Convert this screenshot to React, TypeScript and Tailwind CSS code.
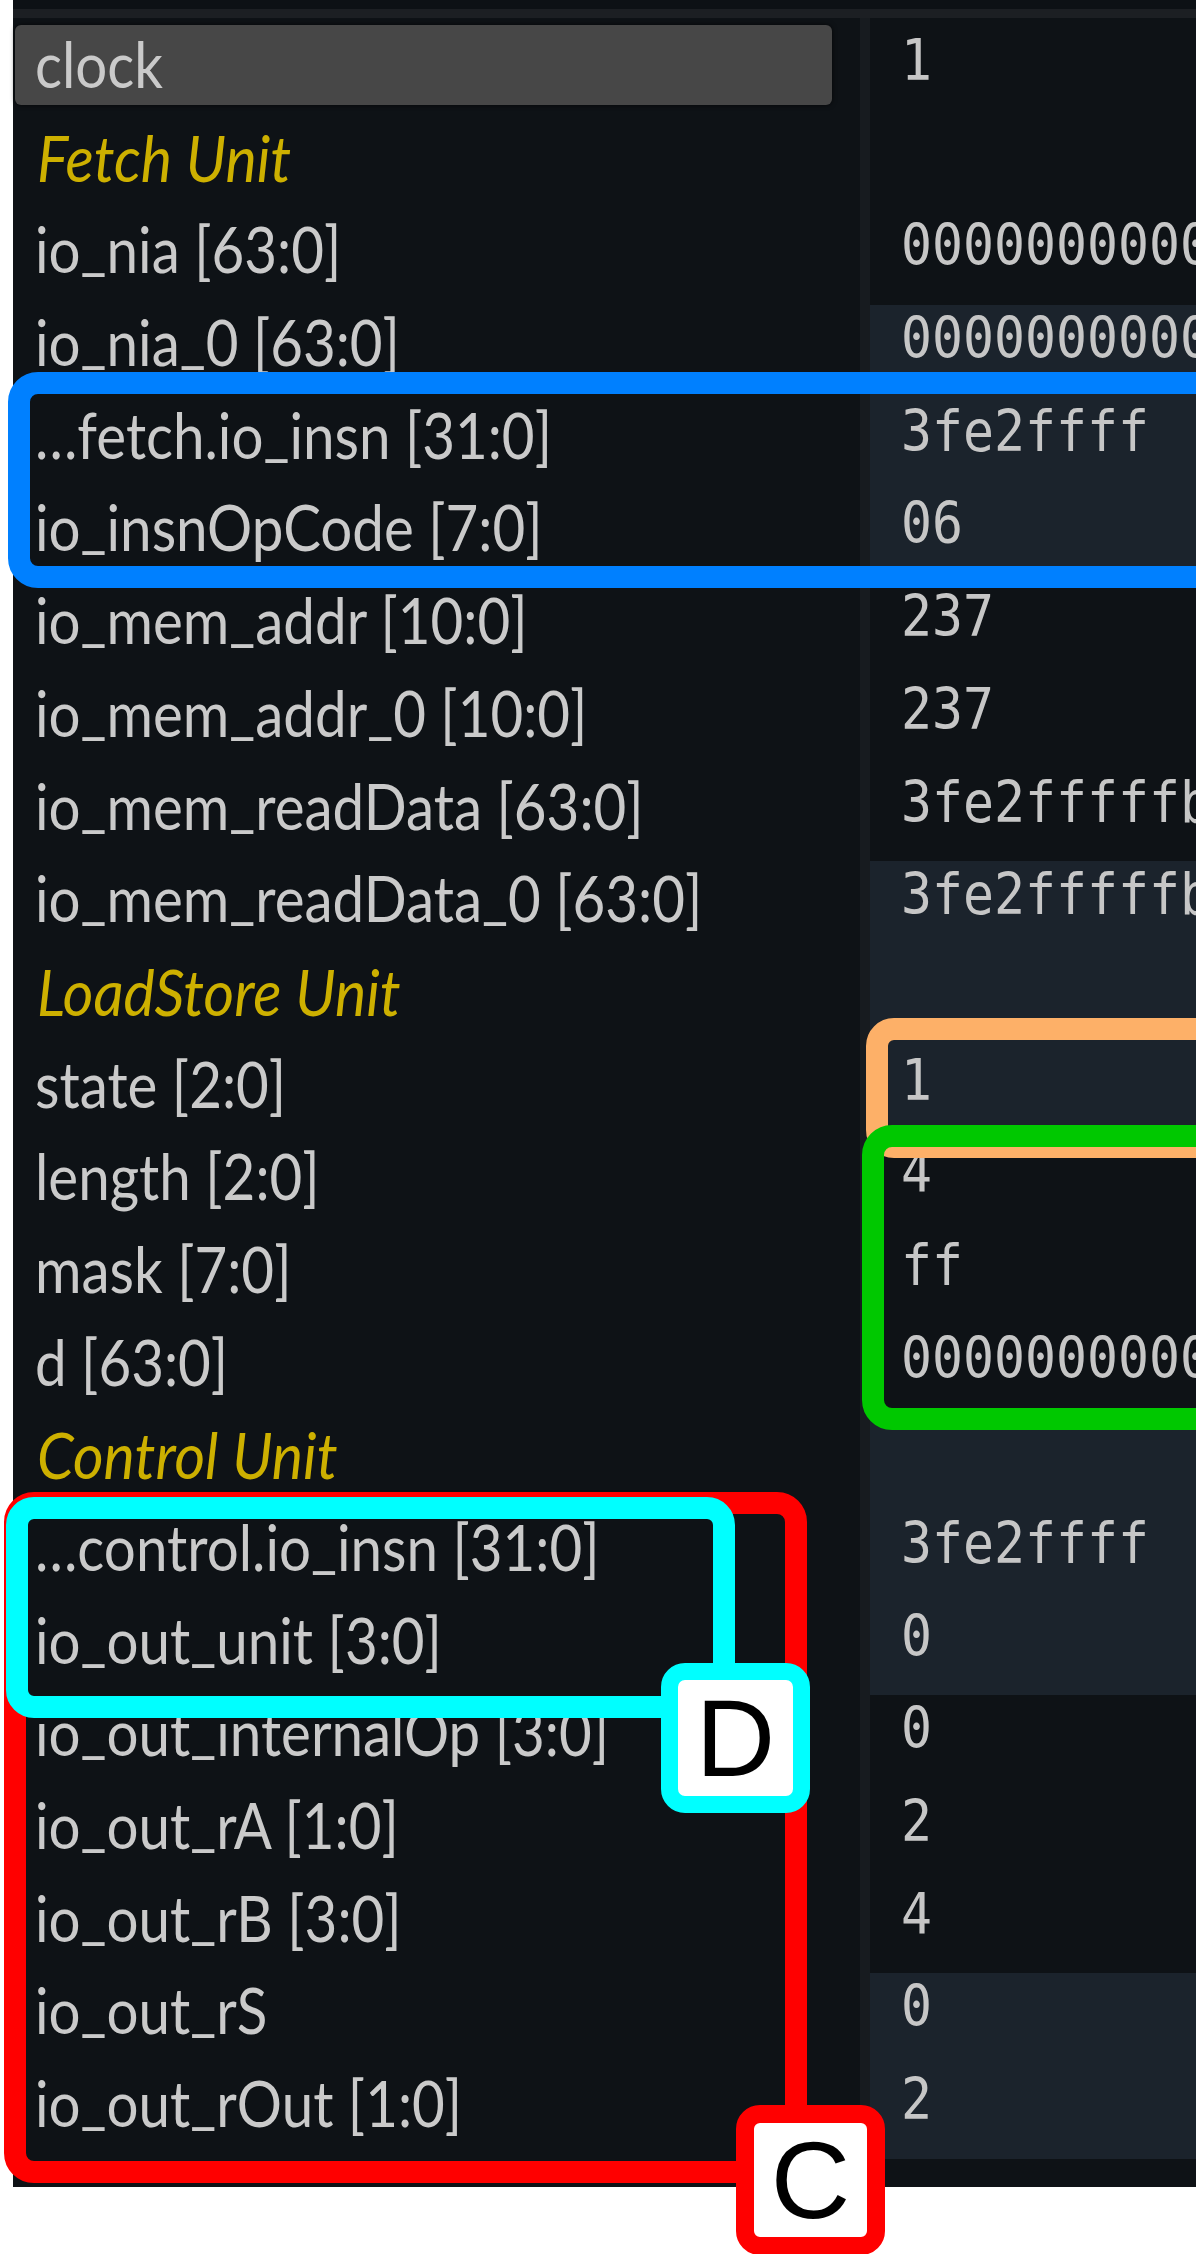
import React from 'react';

type Row = { label: string; value?: string; header?: boolean; hl?: boolean; clock?: boolean };

const rows: Row[] = [
  { label: 'clock', value: '1', clock: true },
  { label: 'Fetch Unit', header: true },
  { label: 'io_nia [63:0]', value: '0000000000000000' },
  { label: 'io_nia_0 [63:0]', value: '0000000000000000', hl: true },
  { label: '…fetch.io_insn [31:0]', value: '3fe2ffff', hl: true },
  { label: 'io_insnOpCode [7:0]', value: '06', hl: true },
  { label: 'io_mem_addr [10:0]', value: '237' },
  { label: 'io_mem_addr_0 [10:0]', value: '237' },
  { label: 'io_mem_readData [63:0]', value: '3fe2fffffbe10000' },
  { label: 'io_mem_readData_0 [63:0]', value: '3fe2fffffbe10000', hl: true },
  { label: 'LoadStore Unit', header: true, hl: true },
  { label: 'state [2:0]', value: '1', hl: true },
  { label: 'length [2:0]', value: '4' },
  { label: 'mask [7:0]', value: 'ff' },
  { label: 'd [63:0]', value: '0000000000000000' },
  { label: 'Control Unit', header: true, hl: true },
  { label: '…control.io_insn [31:0]', value: '3fe2ffff', hl: true },
  { label: 'io_out_unit [3:0]', value: '0', hl: true },
  { label: 'io_out_internalOp [3:0]', value: '0' },
  { label: 'io_out_rA [1:0]', value: '2' },
  { label: 'io_out_rB [3:0]', value: '4' },
  { label: 'io_out_rS', value: '0', hl: true },
  { label: 'io_out_rOut [1:0]', value: '2', hl: true },
];

function withUnderscores(s: string) {
  const parts = s.split('_');
  const out: React.ReactNode[] = [];
  parts.forEach((p, i) => {
    if (i > 0) {
      out.push(
        <span key={`u${i}`} className="relative -top-[4px]">
          _
        </span>
      );
    }
    out.push(<React.Fragment key={`p${i}`}>{p}</React.Fragment>);
  });
  return out;
}

function LabelCell({ row }: { row: Row }) {
  const text = row.header ? (
    <span className="inline-block scale-y-110 text-[59px] leading-[65px] italic text-[#cdb000] whitespace-nowrap">
      {row.label}
    </span>
  ) : (
    <span className="inline-block scale-y-[1.12] text-[56.5px] leading-[65px] text-[#cacaca] whitespace-nowrap">
      {withUnderscores(row.label)}
    </span>
  );
  return (
    <div className="h-[92.7px] pl-[2px]">
      {row.clock ? (
        <div className="w-[817px] h-[80px] -mt-[2px] pt-[6px] pl-[20px] rounded-[6px] bg-[#474747] shadow-[0_0_5px_rgba(0,0,0,0.7)]">
          {text}
        </div>
      ) : row.header ? (
        <div className="w-[817px] pt-[7px] pl-[22px]">{text}</div>
      ) : (
        <div className="w-[817px] pt-[6px] pl-[20px]">{text}</div>
      )}
    </div>
  );
}

function ValueCell({ row }: { row: Row }) {
  return (
    <div className={`h-[92.7px] pl-[31px] pt-[1px] ${row.hl ? 'bg-[#1b232c]' : ''}`}>
      {row.value ? (
        <span className="inline-block scale-y-110 font-['DejaVu_Sans_Mono',monospace] text-[51.5px] leading-[65px] text-[#c6c6c6] whitespace-nowrap">
          {row.value}
        </span>
      ) : null}
    </div>
  );
}

export default function App() {
  return (
    <div className="relative w-[1196px] h-[2254px] overflow-hidden bg-white font-['Lato',sans-serif]">
      <div className="ml-[13px] bg-[#0e1216] flex flex-col">
        <div className="h-[9px] bg-[#0d1115]" />
        <div className="h-[9px] bg-[#1c1f23]" />
        <div className="flex">
          <div className="w-[847px] pt-[9px] shrink-0">
            {rows.map((r, i) => (
              <LabelCell key={i} row={r} />
            ))}
          </div>
          <div className="w-[10px] shrink-0 bg-[#171b1f]" />
          <div className="flex-1 min-w-0 pt-[9px] overflow-hidden">
            {rows.map((r, i) => (
              <ValueCell key={i} row={r} />
            ))}
          </div>
        </div>
        <div className="h-[28px] bg-[#0e1216]" />
      </div>

      {/* Annotation overlays */}
      <div className="absolute left-[8px] top-[372px] w-[1260px] h-[216px] border-[22px] border-[#0080ff] rounded-[30px]" />
      <div className="absolute left-[866px] top-[1018px] w-[400px] h-[140px] border-[22px] border-[#fdb068] rounded-[28px]" />
      <div className="absolute left-[862px] top-[1125px] w-[400px] h-[305px] border-[22px] border-[#00c800] rounded-[30px]" />
      <div className="absolute left-[4px] top-[1492px] w-[803px] h-[691px] border-[22px] border-[#ff0000] rounded-[30px]" />
      <div className="absolute left-[6px] top-[1497px] w-[729px] h-[221px] border-[22px] border-[#00ffff] rounded-[28px]" />
      <div className="absolute left-[661px] top-[1663px] w-[149px] h-[150px] border-[17px] border-[#00ffff] rounded-[24px] bg-white flex items-center justify-center">
        <span className="font-['Liberation_Sans',Arial,sans-serif] text-[110px] leading-none text-black">D</span>
      </div>
      <div className="absolute left-[736px] top-[2105px] w-[149px] h-[150px] border-[18px] border-[#ff0000] rounded-[24px] bg-white flex items-center justify-center">
        <span className="font-['Liberation_Sans',Arial,sans-serif] text-[110px] leading-none text-black">C</span>
      </div>
    </div>
  );
}
